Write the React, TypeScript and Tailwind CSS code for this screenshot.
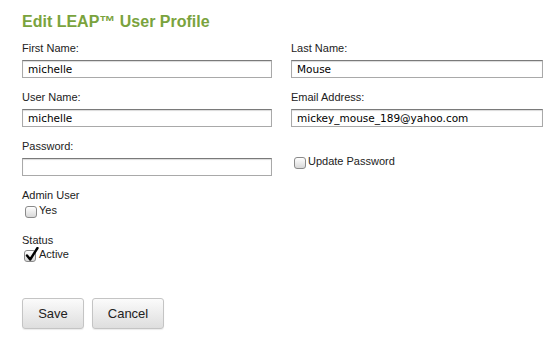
import React from "react";

const labelCls = "block h-[14px] text-[11px] leading-[14px] text-[#222] mb-[5px]";
const inputCls =
  "w-full h-[18px] border border-[#a9a9a9] border-t-[#7a7a7a] bg-white px-[5px] text-[10.5px] leading-[16px] text-black shadow-[inset_0_1px_1px_rgba(0,0,0,0.15)] whitespace-nowrap overflow-hidden";
const inputFont = { fontFamily: '"DejaVu Sans", Verdana, sans-serif' };

function Field({ label, value }: { label: string; value: string }) {
  return (
    <div>
      <div className={labelCls}>{label}</div>
      <div className={inputCls} style={inputFont}>{value}</div>
    </div>
  );
}

function Box({ checked = false }: { checked?: boolean }) {
  return (
    <div className="relative mt-[3px] w-[12px] h-[12px] rounded-[3px] border border-[#8a8a8a] bg-gradient-to-b from-white to-[#d8d8d8] shrink-0">
      {checked && (
        <svg className="absolute left-[0px] top-[-4px]" width="14" height="15" viewBox="0 0 14 15">
          <path d="M2 8.5 L5.2 12.5 L12.5 1" fill="none" stroke="#000" strokeWidth="2.4" strokeLinecap="round" strokeLinejoin="round" />
        </svg>
      )}
    </div>
  );
}

export default function App() {
  return (
    <div className="w-[555px] h-[344px] bg-white pl-[22px] pt-[12px]" style={{ fontFamily: '"Liberation Sans", Arial, Helvetica, sans-serif' }}>
      <h1 className="text-[16px] leading-[20px] font-bold text-[#7aa33d]">Edit LEAP™ User Profile</h1>
      <div className="grid grid-cols-[250px_252px] gap-x-[19px] gap-y-[12px] mt-[9px]">
        <Field label="First Name:" value="michelle" />
        <Field label="Last Name:" value="Mouse" />
        <Field label="User Name:" value="michelle" />
        <Field label="Email Address:" value="mickey_mouse_189@yahoo.com" />
        <Field label="Password:" value="" />
        <div className="pt-[15px] pl-[3px]">
          <div className="flex items-start gap-[2px]">
            <Box />
            <span className="text-[11px] leading-[14px] text-[#222]">Update Password</span>
          </div>
        </div>
      </div>
      <div className="mt-[12px]">
        <div className="text-[11px] leading-[14px] text-[#222]">Admin User</div>
        <div className="flex items-start gap-[2px] pl-[3px] mt-[1px]">
          <Box />
          <span className="text-[11px] leading-[14px] text-[#222]">Yes</span>
        </div>
      </div>
      <div className="mt-[15px]">
        <div className="text-[11px] leading-[14px] text-[#222]">Status</div>
        <div className="flex items-start gap-[3px] pl-[2px]">
          <Box checked />
          <span className="text-[11px] leading-[14px] text-[#222]">Active</span>
        </div>
      </div>
      <div className="flex gap-[8px] mt-[36px]">
        <button className="w-[62px] h-[31px] rounded-[3px] border border-[#c4c4c4] bg-gradient-to-b from-[#fbfbfb] to-[#dedede] text-[13px] text-[#222] shadow-[0_1px_1px_rgba(0,0,0,0.08)]">Save</button>
        <button className="w-[72px] h-[31px] rounded-[3px] border border-[#c4c4c4] bg-gradient-to-b from-[#fbfbfb] to-[#dedede] text-[13px] text-[#222] shadow-[0_1px_1px_rgba(0,0,0,0.08)]">Cancel</button>
      </div>
    </div>
  );
}
